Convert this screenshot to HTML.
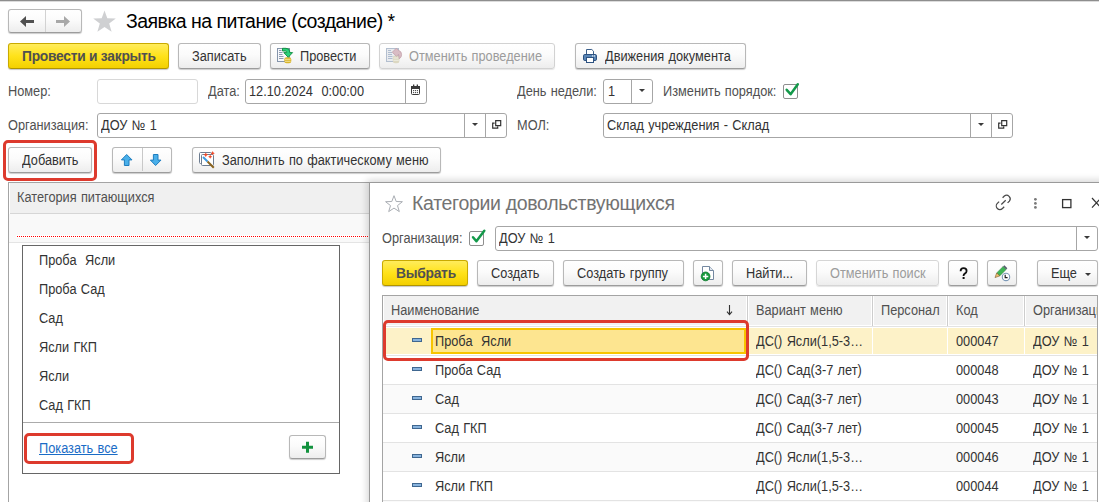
<!DOCTYPE html>
<html><head><meta charset="utf-8">
<style>
*{box-sizing:border-box;margin:0;padding:0}
html,body{width:1099px;height:502px;overflow:hidden;background:#fff;position:relative;font-family:"Liberation Sans",sans-serif;font-size:13.33px;color:#333}
.a{position:absolute}
svg.a{overflow:visible}
.t{position:absolute;white-space:pre;line-height:14px;font-size:13.8px;letter-spacing:0;word-spacing:0.8px;color:#333;transform:scaleX(0.925);transform-origin:0 0}
.lbl{color:#505050}
.b{font-weight:bold;letter-spacing:-0.25px;word-spacing:0;color:#505050;transform:none}
.btn{position:absolute;border:1px solid #b8b8b8;border-bottom-color:#9c9c9c;border-radius:3px;background:linear-gradient(#ffffff 0%,#fbfbfb 45%,#ededed 100%);box-shadow:0 1px 1px rgba(0,0,0,.2)}
.ybtn{position:absolute;border:1px solid #c9aa00;border-bottom-color:#b09400;border-radius:3px;background:linear-gradient(#ffec5c 0%,#ffe21a 50%,#f3d000 100%);box-shadow:0 1px 1px rgba(0,0,0,.22)}
.inp{position:absolute;border:1px solid #a6a6a6;border-radius:3px;background:#fff}
.dv{position:absolute;top:0;bottom:0;width:1px;background:#a6a6a6}
.arr{position:absolute;width:0;height:0;border-left:3px solid transparent;border-right:3px solid transparent;border-top:3px solid #3a3a3a;margin-left:-0.5px}
.redbox{position:absolute;border:3px solid #dd3a2d;border-radius:5px}
.cb{position:absolute;width:15px;height:15px;border:1px solid #8e8e8e;border-radius:2px;background:#fff}
.row{position:absolute;left:383px;width:714px;height:29px;border-top:1px solid #e3e3e3}
.dash{position:absolute;width:10px;height:4px;background:#88b3dd;border:1px solid #3f6790}
</style></head><body>

<!-- top line -->
<div class="a" style="left:0;top:0;width:1099px;height:1px;background:#8e8e8e"></div>
<div class="a" style="left:0;top:1px;width:1099px;height:1px;background:#dcdcdc"></div>

<!-- nav buttons -->
<div class="btn" style="left:8px;top:9px;width:74px;height:24px"></div>
<div class="a" style="left:45px;top:10px;width:1px;height:22px;background:#d2d2d2"></div>
<svg class="a" style="left:0;top:0" width="1" height="1"><path d="M20 21.5 L26 16 L26 20 L34 20 L34 23 L26 23 L26 27 Z" fill="#505050"/><path d="M70 21.5 L64 16 L64 20 L56 20 L56 23 L64 23 L64 27 Z" fill="#a8a8a8"/></svg>

<!-- star -->
<svg class="a" style="left:0;top:0" width="1" height="1"><path d="M104.5 10.5 L107.3 18.2 L115.8 18.4 L109.2 23.6 L111.6 31.8 L104.5 27 L97.4 31.8 L99.8 23.6 L93.2 18.4 L101.7 18.2 Z" fill="#cfd0d2"/></svg>

<div class="t" style="left:126px;top:10px;font-size:19.5px;letter-spacing:-0.53px;word-spacing:0;transform:none;line-height:22px;color:#000">Заявка на питание (создание) *</div>

<!-- command bar -->
<div class="ybtn" style="left:8px;top:43px;width:161px;height:26px"></div>
<div class="t b" style="left:22px;top:50px">Провести и закрыть</div>

<div class="btn" style="left:178px;top:43px;width:83px;height:26px"></div>
<div class="t" style="left:192px;top:50px">Записать</div>

<div class="btn" style="left:270px;top:43px;width:100px;height:26px"></div>
<svg class="a" style="left:0;top:0" width="1" height="1">
 <rect x="277.5" y="48.5" width="12" height="13" fill="#f7f8fb" stroke="#8595ab"/>
 <path d="M279 50.5h2.5M279 52.5h3.5M279 54.5h3.5M279 56.5h4.5M279 58.5h4.5" stroke="#8d9bb0" stroke-width="1"/>
 <rect x="284.3" y="57.2" width="7" height="6" rx="2.2" fill="#d9b52a"/>
 <path d="M285 59.3h5.6M285 61.3h5.6" stroke="#f6e9a8" stroke-width="0.9"/>
 <path d="M282.5 48.3 H286 Q289.8 48.3 289.8 52 V52.6 H292.6 L288.2 57.3 L283.8 52.6 H286.6 V52.3 Q286.6 51 285.3 51 H282.5 Z" fill="#2bd07a" stroke="#0f8a3c" stroke-width="0.9" stroke-linejoin="round"/>
</svg>
<div class="t" style="left:300px;top:50px">Провести</div>

<div class="btn" style="left:379px;top:43px;width:176px;height:26px;border-color:#d2d2d2;box-shadow:0 1px 1px rgba(0,0,0,.1)"></div>
<svg class="a" style="left:0;top:0" width="1" height="1">
 <rect x="386.5" y="48.5" width="12" height="13" fill="#e9ebef" stroke="#b3bfcf"/>
 <path d="M388 50.5h3M388 52.5h4M388 54.5h4M388 56.5h4.5M388 58.5h4.5" stroke="#aebdd0" stroke-width="1"/>
 <rect x="392.8" y="55.6" width="6.6" height="7.6" rx="2.2" fill="#dcd8c2"/>
 <path d="M393.4 58h5.4M393.4 60.3h5.4" stroke="#f1efe4" stroke-width="0.9"/>
 <path d="M392.3 52.2 L396.3 48.2 L398.3 50.2 Q401.6 51.2 401.6 54.6 Q401.6 57.6 399.2 58.8 L398.6 54.4 L396.4 56.3 Z" fill="#d9bcc4" stroke="#c19fa9" stroke-width="0.8" stroke-linejoin="round"/>
</svg>
<div class="t" style="left:409px;top:50px;color:#9c9c9c">Отменить проведение</div>

<div class="btn" style="left:575px;top:43px;width:171px;height:26px"></div>
<svg class="a" style="left:0;top:0" width="1" height="1">
 <path d="M586.5 54 V49.5 H591.8 L593.5 51.2 V54" fill="#fff" stroke="#3b5f8a" stroke-width="1"/>
 <rect x="583.5" y="54.5" width="13" height="6" rx="1.3" fill="#5a86b6" stroke="#2d5281"/>
 <rect x="586.5" y="57.5" width="7" height="5" fill="#fff" stroke="#2d5281"/>
 <circle cx="592.6" cy="55.9" r="0.6" fill="#fff"/><circle cx="594.4" cy="55.9" r="0.6" fill="#fff"/>
</svg>
<div class="t" style="left:605px;top:50px">Движения документа</div>

<!-- row 2 -->
<div class="t lbl" style="left:8px;top:85px">Номер:</div>
<div class="inp" style="left:97px;top:79px;width:101px;height:25px;border-color:#d8d8d8"></div>
<div class="t lbl" style="left:208px;top:85px">Дата:</div>
<div class="inp" style="left:245px;top:79px;width:182px;height:25px"><div class="dv" style="left:159px"></div></div>
<svg class="a" style="left:0;top:0" width="1" height="1">
 <rect x="411.5" y="86.5" width="8" height="8" rx="1" fill="#fff" stroke="#3a3a3a"/>
 <rect x="411" y="86" width="9" height="3" fill="#3a3a3a"/>
 <rect x="413" y="84.5" width="1.3" height="2.5" fill="#3a3a3a"/><rect x="416.7" y="84.5" width="1.3" height="2.5" fill="#3a3a3a"/>
 <g fill="#3a3a3a"><circle cx="413.6" cy="90.6" r="0.65"/><circle cx="415.5" cy="90.6" r="0.65"/><circle cx="417.4" cy="90.6" r="0.65"/><circle cx="413.6" cy="92.6" r="0.65"/><circle cx="415.5" cy="92.6" r="0.65"/><circle cx="417.4" cy="92.6" r="0.65"/></g>
</svg>
<div class="t" style="left:249px;top:85px">12.10.2024  0:00:00</div>
<div class="t lbl" style="left:517px;top:85px">День недели:</div>
<div class="inp" style="left:603px;top:79px;width:50px;height:25px"><div class="dv" style="left:27px"></div><div class="arr" style="left:35px;top:9px"></div></div>
<div class="t" style="left:608px;top:85px">1</div>
<div class="t lbl" style="left:663px;top:85px">Изменить порядок:</div>
<div class="cb" style="left:783px;top:84px"></div>
<svg class="a" style="left:0;top:0" width="1" height="1"><path d="M786.7 89.8 L790.6 94.2 L797.8 84.3" fill="none" stroke="#13994a" stroke-width="2.5" stroke-linecap="round" stroke-linejoin="round"/></svg>

<!-- row 3 -->
<div class="t lbl" style="left:8px;top:119px">Организация:</div>
<div class="inp" style="left:97px;top:113px;width:410px;height:25px"><div class="dv" style="left:366px"></div><div class="arr" style="left:374px;top:9px"></div><div class="dv" style="left:387px"></div></div>
<svg class="a" style="left:0;top:0" width="1" height="1"><path d="M495.7 120.7h5v5h-5z M494.6 123.2H492.7V128.2H497.7V126.4" fill="none" stroke="#333" stroke-width="1.2"/></svg>
<div class="t" style="left:101px;top:119px">ДОУ № 1</div>
<div class="t lbl" style="left:517px;top:119px">МОЛ:</div>
<div class="inp" style="left:603px;top:113px;width:410px;height:25px"><div class="dv" style="left:366px"></div><div class="arr" style="left:374px;top:9px"></div><div class="dv" style="left:387px"></div></div>
<svg class="a" style="left:0;top:0" width="1" height="1"><path d="M1001.7 120.7h5v5h-5z M1000.6 123.2H998.7V128.2H1003.7V126.4" fill="none" stroke="#333" stroke-width="1.2"/></svg>
<div class="t" style="left:607px;top:119px">Склад учреждения - Склад</div>

<!-- row 4 -->
<div class="btn" style="left:8px;top:147px;width:84px;height:26px"></div>
<div class="t" style="left:22px;top:154px">Добавить</div>
<div class="redbox" style="left:3px;top:140px;width:94px;height:41px"></div>
<div class="btn" style="left:112px;top:147px;width:60px;height:26px"></div>
<div class="a" style="left:142px;top:148px;width:1px;height:23px;background:#c8c8c8"></div>
<svg class="a" style="left:0;top:0" width="1" height="1">
 <path d="M126.7 154.5 L132 159.9 L129 159.9 L129 165.5 L124.4 165.5 L124.4 159.9 L121.4 159.9 Z" fill="#49afe9" stroke="#1e7dbf" stroke-width="1"/>
 <path d="M155.6 165.5 L161 160.1 L158 160.1 L158 154.5 L153.4 154.5 L153.4 160.1 L150.4 160.1 Z" fill="#49afe9" stroke="#1e7dbf" stroke-width="1"/>
</svg>
<div class="btn" style="left:192px;top:147px;width:249px;height:26px"></div>
<svg class="a" style="left:0;top:0" width="1" height="1">
 <rect x="199.5" y="152.5" width="12" height="11" rx="1" fill="#fff" stroke="#6c7c90"/>
 <rect x="201.5" y="154.5" width="12" height="11" rx="1" fill="#fff" stroke="#6c7c90"/>
 <path d="M203 157 L207.5 161.5" stroke="#3d9ae0" stroke-width="2"/>
 <path d="M207.5 161.5 L213.8 167.8" stroke="#8a6420" stroke-width="2"/>
 <g fill="#f04a2a"><path d="M205 154 l0.8 -1.6 l0.8 1.6 l1.6 0.8 l-1.6 0.8 l-0.8 1.6 l-0.8 -1.6 l-1.6 -0.8z"/><path d="M209.5 156 l0.7 -1.4 l0.7 1.4 l1.4 0.7 l-1.4 0.7 l-0.7 1.4 l-0.7 -1.4 l-1.4 -0.7z"/><path d="M212 152.5 l0.7 -1.4 l0.7 1.4 l1.4 0.7 l-1.4 0.7 l-0.7 1.4 l-0.7 -1.4 l-1.4 -0.7z"/></g>
</svg>
<div class="t" style="left:222px;top:154px">Заполнить по фактическому меню</div>

<!-- left table -->
<div class="a" style="left:8px;top:182px;width:420px;height:330px;border:1px solid #a4a4a4;background:#fff"></div>
<div class="a" style="left:9px;top:183px;width:418px;height:31px;background:#f0f0f0;border-bottom:1px solid #d6d6d6"></div>
<div class="a" style="left:9px;top:183px;width:1px;height:59px;background:#fff"></div>
<div class="t lbl" style="left:17px;top:191px">Категория питающихся</div>
<div class="a" style="left:9px;top:214px;width:418px;height:29px;background:#f9f9f9;border-bottom:1px solid #e4e4e4"></div>
<div class="a" style="left:16px;top:235px;width:400px;height:3px;background:repeating-linear-gradient(90deg,#fff 0 2px,#fcfcfc 2px 2px)"></div><div class="a" style="left:17px;top:236px;width:400px;height:1px;background:repeating-linear-gradient(90deg,#ff0000 0 1px,#fff 1px 2px)"></div>

<div class="a" style="left:22px;top:245px;width:318px;height:229px;border:1px solid #666;background:#fff"></div>
<div class="t" style="left:39px;top:254px">Проба  Ясли</div>
<div class="t" style="left:39px;top:283px">Проба Сад</div>
<div class="t" style="left:39px;top:312px">Сад</div>
<div class="t" style="left:39px;top:341px">Ясли ГКП</div>
<div class="t" style="left:39px;top:370px">Ясли</div>
<div class="t" style="left:39px;top:399px">Сад ГКП</div>
<div class="a" style="left:23px;top:422px;width:316px;height:1px;background:#ababab"></div>
<div class="t" style="left:39px;top:442px;color:#1a6cc6;text-decoration:underline">Показать все</div>
<div class="redbox" style="left:24px;top:433px;width:110px;height:31px"></div>
<div class="btn" style="left:289px;top:435px;width:37px;height:24px"></div>
<svg class="a" style="left:0;top:0" width="1" height="1"><path d="M302 447.3h11M307.5 441.8v11" stroke="#12923e" stroke-width="3"/></svg>

<!-- dialog -->
<div class="a" style="left:369px;top:182px;width:800px;height:400px;border:1px solid #9a9a9a;background:#fff;box-shadow:-2px -2px 7px rgba(0,0,0,.16)"></div>
<svg class="a" style="left:0;top:0" width="1" height="1"><path d="M394 195.7 L396.2 201.5 L402.4 201.7 L397.5 205.6 L399.3 211.6 L394 208.1 L388.7 211.6 L390.5 205.6 L385.6 201.7 L391.8 201.5 Z" fill="none" stroke="#a9adb3" stroke-width="1"/></svg>
<div class="t" style="left:412px;top:192px;font-size:19.5px;letter-spacing:-0.32px;word-spacing:0;transform:none;line-height:22px;color:#737373">Категории довольствующихся</div>
<svg class="a" style="left:0;top:0" width="1" height="1">
 <path d="M1002.6 197.8 L1004.35 196.05 A3.6 3.6 0 0 1 1009.4 201.1 L1007.6 202.9 M999.1 201.6 L997.35 203.35 A3.6 3.6 0 0 0 1002.45 208.45 L1004.2 206.7 M1001.3 204.5 L1005.7 200.3" fill="none" stroke="#4a4a4a" stroke-width="1.25"/>
 <g fill="#7a7a7a"><circle cx="1035.4" cy="199.3" r="1.4"/><circle cx="1035.4" cy="203.4" r="1.4"/><circle cx="1035.4" cy="207.4" r="1.4"/></g>
 <rect x="1062.6" y="199.6" width="8.3" height="8" fill="none" stroke="#333" stroke-width="1.3"/>
 <path d="M1092 198 L1101 207.7 M1101 198 L1092 207.7" stroke="#333" stroke-width="1.2"/>
</svg>
<div class="t lbl" style="left:382px;top:232px">Организация:</div>
<div class="cb" style="left:469px;top:231px"></div>
<svg class="a" style="left:0;top:0" width="1" height="1"><path d="M473 237.2 L476.4 241.3 L484.3 230.8" fill="none" stroke="#13994a" stroke-width="2.5" stroke-linecap="round" stroke-linejoin="round"/></svg>
<div class="inp" style="left:495px;top:226px;width:603px;height:25px"><div class="dv" style="left:580px"></div><div class="arr" style="left:588px;top:9px"></div></div>
<div class="t" style="left:499px;top:232px">ДОУ № 1</div>

<!-- dialog toolbar -->
<div class="ybtn" style="left:382px;top:260px;width:86px;height:26px"></div>
<div class="t b" style="left:396px;top:267px">Выбрать</div>
<div class="btn" style="left:477px;top:260px;width:77px;height:26px"></div>
<div class="t" style="left:491px;top:267px">Создать</div>
<div class="btn" style="left:563px;top:260px;width:121px;height:26px"></div>
<div class="t" style="left:577px;top:267px">Создать группу</div>
<div class="btn" style="left:693px;top:260px;width:30px;height:26px"></div>
<svg class="a" style="left:0;top:0" width="1" height="1">
 <path d="M702.5 266.5 H709.5 L713.5 270.5 V279.5 H702.5 Z" fill="#fff" stroke="#7488a0"/>
 <path d="M709.5 266.5 V270.5 H713.5" fill="#dfe6ee" stroke="#7488a0"/>
 <circle cx="705.6" cy="276.4" r="4.4" fill="#169a3c" stroke="#0d7a2c" stroke-width="0.8"/>
 <path d="M702.9 276.4h5.4M705.6 273.7v5.4" stroke="#fff" stroke-width="1.5"/>
</svg>
<div class="btn" style="left:732px;top:260px;width:75px;height:26px"></div>
<div class="t" style="left:746px;top:267px">Найти...</div>
<div class="btn" style="left:816px;top:260px;width:123px;height:26px;border-color:#d6d6d6;box-shadow:0 1px 1px rgba(0,0,0,.1)"></div>
<div class="t" style="left:830px;top:267px;color:#9c9c9c">Отменить поиск</div>
<div class="btn" style="left:948px;top:260px;width:30px;height:26px"></div>
<svg class="a" style="left:0;top:0" width="1" height="1"><path d="M960.6 271.3 Q960.6 268.2 963.6 268.2 Q966.6 268.2 966.6 271 Q966.6 272.6 964.8 273.6 Q963.6 274.3 963.6 275.6 V276" fill="none" stroke="#111" stroke-width="1.8"/><rect x="962.6" y="277" width="2" height="2" fill="#111"/></svg>
<div class="btn" style="left:987px;top:260px;width:30px;height:26px"></div>
<svg class="a" style="left:0;top:0" width="1" height="1">
 <path d="M996.7 272.9 L1003.1 266.5 L1006.1 269.5 L999.7 275.9 Z" fill="#3fb655" stroke="#2a7a3a" stroke-width="0.5"/>
 <path d="M1003.1 266.5 L1004.4 265.2 L1007.4 268.2 L1006.1 269.5 Z" fill="#56606c"/>
 <path d="M996.7 272.9 L999.7 275.9 L995 277.6 Z" fill="#f0c070" stroke="#7a5a2a" stroke-width="0.6" stroke-linejoin="round"/>
 <circle cx="1006" cy="276.9" r="3.7" fill="#fff" stroke="#7d9ab8" stroke-width="1.1"/>
 <path d="M1005.2 274.7 V277.6 H1007.6" fill="none" stroke="#222" stroke-width="1.2"/>
</svg>
<div class="btn" style="left:1037px;top:260px;width:61px;height:26px"></div>
<div class="t" style="left:1051px;top:267px">Еще</div>
<div class="arr" style="left:1085.5px;top:273px"></div>

<!-- dialog table -->
<div class="a" style="left:382px;top:295px;width:740px;height:240px;border:1px solid #a4a4a4;background:#fff"></div>
<div class="a" style="left:383px;top:296px;width:720px;height:30px;background:#f1f1f1;border-bottom:1px solid #fff"></div>
<div class="a" style="left:383px;top:326px;width:714px;height:1px;background:#cfcfcf"></div>
<div class="a" style="left:383px;top:296px;width:1px;height:29px;background:#fff"></div>
<div class="a" style="left:746px;top:296px;width:3px;height:30px;background:#fff"></div><div class="a" style="left:747px;top:296px;width:1px;height:30px;background:#cdcdcd"></div>
<div class="a" style="left:871px;top:296px;width:3px;height:30px;background:#fff"></div><div class="a" style="left:872px;top:296px;width:1px;height:30px;background:#cdcdcd"></div>
<div class="a" style="left:946px;top:296px;width:3px;height:30px;background:#fff"></div><div class="a" style="left:947px;top:296px;width:1px;height:30px;background:#cdcdcd"></div>
<div class="a" style="left:1023px;top:296px;width:3px;height:30px;background:#fff"></div><div class="a" style="left:1024px;top:296px;width:1px;height:30px;background:#cdcdcd"></div>
<div class="t lbl" style="left:391px;top:304px">Наименование</div>
<svg class="a" style="left:0;top:0" width="1" height="1"><path d="M729.5 305 V314 M727 311.6 L729.5 314.6 L732 311.6" fill="none" stroke="#333" stroke-width="1.1"/></svg>
<div class="t lbl" style="left:756px;top:304px">Вариант меню</div>
<div class="t lbl" style="left:881px;top:304px">Персонал</div>
<div class="t lbl" style="left:956px;top:304px">Код</div>
<div class="a" style="left:1026px;top:296px;width:71px;height:30px;overflow:hidden"><div class="t lbl" style="left:7px;top:8px">Организация</div></div>

<!-- rows -->
<div class="row" style="top:326px;background:#fff"></div><div class="a" style="left:383px;top:328px;width:714px;height:26px;background:#fdf2c8"></div>
<div class="row" style="top:355px;background:#fff"></div>
<div class="row" style="top:384px;background:#fafafa"></div>
<div class="row" style="top:413px;background:#fff"></div>
<div class="row" style="top:442px;background:#fafafa"></div>
<div class="row" style="top:471px;background:#fff"></div>
<div class="row" style="top:500px;background:#fafafa"></div>
<div class="a" style="left:872px;top:327px;width:1px;height:28px;background:#fff"></div><div class="a" style="left:747px;top:327px;width:1px;height:28px;background:#fff"></div>
<div class="a" style="left:947px;top:327px;width:1px;height:28px;background:#fff"></div>
<div class="a" style="left:1024px;top:327px;width:1px;height:28px;background:#fff"></div>
<div class="a" style="left:431px;top:328px;width:315px;height:26px;background:#fde590;border:2px solid #f7c400"></div>

<div class="dash" style="left:412px;top:338px"></div>
<div class="dash" style="left:412px;top:367px"></div>
<div class="dash" style="left:412px;top:396px"></div>
<div class="dash" style="left:412px;top:425px"></div>
<div class="dash" style="left:412px;top:454px"></div>
<div class="dash" style="left:412px;top:483px"></div>

<div class="t" style="left:435px;top:335px">Проба  Ясли</div>
<div class="t" style="left:435px;top:364px">Проба Сад</div>
<div class="t" style="left:435px;top:393px">Сад</div>
<div class="t" style="left:435px;top:422px">Сад ГКП</div>
<div class="t" style="left:435px;top:451px">Ясли</div>
<div class="t" style="left:435px;top:480px">Ясли ГКП</div>

<div class="t" style="left:756px;top:335px">ДС() Ясли(1,5-3…</div>
<div class="t" style="left:756px;top:364px">ДС() Сад(3-7 лет)</div>
<div class="t" style="left:756px;top:393px">ДС() Сад(3-7 лет)</div>
<div class="t" style="left:756px;top:422px">ДС() Сад(3-7 лет)</div>
<div class="t" style="left:756px;top:451px">ДС() Ясли(1,5-3…</div>
<div class="t" style="left:756px;top:480px">ДС() Ясли(1,5-3…</div>

<div class="t" style="left:956px;top:335px">000047</div>
<div class="t" style="left:956px;top:364px">000048</div>
<div class="t" style="left:956px;top:393px">000043</div>
<div class="t" style="left:956px;top:422px">000045</div>
<div class="t" style="left:956px;top:451px">000046</div>
<div class="t" style="left:956px;top:480px">000044</div>

<div class="t" style="left:1033px;top:335px">ДОУ № 1</div>
<div class="t" style="left:1033px;top:364px">ДОУ № 1</div>
<div class="t" style="left:1033px;top:393px">ДОУ № 1</div>
<div class="t" style="left:1033px;top:422px">ДОУ № 1</div>
<div class="t" style="left:1033px;top:451px">ДОУ № 1</div>
<div class="t" style="left:1033px;top:480px">ДОУ № 1</div>

<div class="a" style="left:1097px;top:295px;width:1px;height:207px;background:#a4a4a4"></div><div class="a" style="left:1098px;top:288px;width:1px;height:214px;background:#fff"></div>

<div class="redbox" style="left:383px;top:320px;width:366px;height:41px"></div>

</body></html>
